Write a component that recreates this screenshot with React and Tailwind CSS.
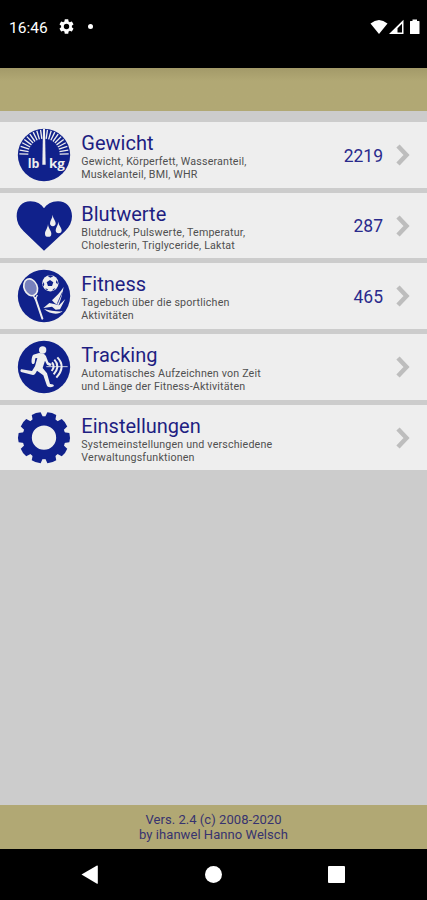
import React from "react";

const NAVY = "#10218b";
const PAPER = "#eeeeee";

// tick marks fan out over the upper half of the scale dial
const TICKS = [-89, -80, -71, -62, -53, -44, -35, -26, -17, -8, 8, 17, 26, 35, 44, 53, 62, 71, 80, 89];

function ScaleIcon() {
    return (
        <svg viewBox="22 24 162 162" className="size-[54px] shrink-0">
            <circle cx="103" cy="105" r="78.5" fill={NAVY} />
            <g stroke={PAPER} strokeWidth="4">
                {TICKS.map((a) => (
                    <line key={a} x1="103" y1="29" x2="103" y2="56" transform={`rotate(${a} 103 103)`} />
                ))}
            </g>
            <path d="M100 26h6l2 108h-10z" fill={PAPER} />
            <g fill={PAPER} fontFamily="'Open Sans', sans-serif" fontWeight="700" fontSize="37">
                <text x="54" y="143" textLength="35" lengthAdjust="spacingAndGlyphs">lb</text>
                <text x="118" y="143" textLength="48" lengthAdjust="spacingAndGlyphs">kg</text>
            </g>
        </svg>
    );
}

function HeartIcon() {
    return (
        <svg viewBox="22 26 162 162" className="size-[54px] shrink-0 overflow-visible">
            <path
                d="M103 181L42 123C28 109 21 95 21 78C21 50 38 33 62 33C82 33 96 43 103 54C111 43 125 33 145 33C169 33 187 50 187 78C187 95 180 109 166 123Z"
                fill={NAVY}
            />
            <g fill={PAPER}>
                <path d="M129 73C130 85 138 91 138 99A8.500 8.500 0 0 1 121 99C121 91 128 85 129 73Z" />
                <path d="M115 101C116 115 125 121 125 130A9.500 9.500 0 0 1 106 130C106 121 114 115 115 101Z" />
                <path d="M146 94C147 106 156 112 156 120A9 9 0 0 1 138 120C138 112 145 106 146 94Z" />
            </g>
        </svg>
    );
}

function FitnessIcon() {
    return (
        <svg viewBox="22 22 162 162" className="size-[54px] shrink-0">
            <circle cx="103" cy="103" r="78.500" fill={NAVY} />
            {/* racket */}
            <ellipse cx="63" cy="77" rx="19.500" ry="26" transform="rotate(-23 63 77)" fill="#7881bd" stroke={PAPER} strokeWidth="5" />
            <path d="M71 102L77 112L83 100" fill="none" stroke={PAPER} strokeWidth="4" />
            <path d="M77 109L98 171" stroke={PAPER} strokeWidth="6" strokeLinecap="round" />
            {/* ball */}
            <circle cx="122" cy="65" r="24.500" fill={PAPER} />
            <g fill={NAVY}>
                <path d="M121 55L131 62L127 73L115 73L111 62Z" />
                <path d="M114 43L122 41L131 44L122 48Z" />
                <path d="M100 61L104 67L102 75L99 69Z" />
                <path d="M140 55L144 61L144 68L139 63Z" />
                <path d="M131 82L137 79L133 85L127 87Z" />
                <path d="M107 80L113 82L116 86L110 84Z" />
            </g>
            {/* windsurfer */}
            <path d="M162 76C152 92 139 104 127 116C132 123 138 128 147 130C154 114 158 96 162 76Z" fill={PAPER} />
            <path d="M158 92L143 126" stroke={NAVY} strokeWidth="2.500" />
            <path d="M119 124L130 126L148 131L167 112L151 143L138 144L127 135L101 139Z" fill={PAPER} />
            <path d="M103 142C122 147 140 150 159 149C146 160 120 158 103 142Z" fill={PAPER} />
        </svg>
    );
}

function RunnerIcon() {
    return (
        <svg viewBox="22 24 162 162" className="size-[54px] shrink-0">
            <circle cx="103" cy="105" r="78.500" fill={NAVY} />
            <g fill={PAPER}>
                <circle cx="99" cy="54" r="11" />
                <path d="M88 63L71 68C67 71 65 83 66 92C67 97 73 97 75 92L77 79L83 78L76 103L67 117L36 112C31 112 31 120 37 121L70 129C75 129 79 122 82 116L101 130L111 159C113 167 124 167 132 163C135 158 126 156 121 156L112 124L99 108L106 86L112 98L121 102C127 102 127 96 122 94L116 91L109 73C106 66 98 63 88 63Z" />
            </g>
            <path d="M110 104L174 104" stroke={PAPER} strokeWidth="2.500" />
            <g fill="none" stroke={PAPER} strokeWidth="6">
                <path d="M127 91Q137 103 126 117" />
                <path d="M134 83Q153 103 132 127" />
                <path d="M143 76Q170 103 140 137" />
            </g>
        </svg>
    );
}

const TEETH = [18, 54, 90, 126, 162, 198, 234, 270, 306, 342];

function GearIcon() {
    return (
        <svg viewBox="22 26 162 162" className="size-[54px] shrink-0">
            <circle cx="103" cy="106" r="50.500" fill="none" stroke={NAVY} strokeWidth="28" />
            {TEETH.map((a) => (
                <path key={a} d="M87 46L89 30Q103 26 117 30L119 46Z" fill={NAVY} transform={`rotate(${a} 103 106)`} />
            ))}
        </svg>
    );
}

const ITEMS = [
    { title: "Gewicht", lines: ["Gewicht, Körperfett, Wasseranteil,", "Muskelanteil, BMI, WHR"], count: 2219, Icon: ScaleIcon },
    { title: "Blutwerte", lines: ["Blutdruck, Pulswerte, Temperatur,", "Cholesterin, Triglyceride, Laktat"], count: 287, Icon: HeartIcon },
    { title: "Fitness", lines: ["Tagebuch über die sportlichen", "Aktivitäten"], count: 465, Icon: FitnessIcon },
    { title: "Tracking", lines: ["Automatisches Aufzeichnen von Zeit", "und Länge der Fitness-Aktivitäten"], Icon: RunnerIcon },
    { title: "Einstellungen", lines: ["Systemeinstellungen und verschiedene", "Verwaltungsfunktionen"], Icon: GearIcon },
];

function MenuRow({ title, lines, count, Icon }) {
    return (
        <div className="flex h-[65.7px] items-center bg-[#eeeeee] pl-[17.300px] pr-[16px]">
            <Icon />
            <div className="ml-[10px] flex-1 pt-[2px]">
                <div className="text-[20px] leading-[24px] text-[#1e1e82]">{title}</div>
                {lines.map((line) => (
                    <div key={line} className="whitespace-nowrap text-[10.700px] leading-[13px] tracking-[0.17px] text-[#505050]">
                        {line}
                    </div>
                ))}
            </div>
            <div className="pt-[2px] text-[17.500px] text-[#2a2a8c]">{count}</div>
            <svg viewBox="0 0 16 24" className="ml-[12px] h-6 w-4 shrink-0">
                <path d="M3 3L11.500 12L3 21" fill="none" stroke="#bdbdbd" strokeWidth="4.500" />
            </svg>
        </div>
    );
}

function StatusBar() {
    return (
        <div className="flex h-[68px] items-start bg-black pl-[9px] pr-[7px] pt-[17px] text-white">
            <div className="w-[50px] text-[15.500px] leading-[22px]">16:46</div>
            <svg viewBox="2 2 20 20" className="mt-[2px] size-[15px]" fill="white">
                <path d="M19.140 12.940c.04-.3.060-.61.060-.94 0-.32-.020-.64-.070-.94l2.030-1.580a.49.49 0 0 0 .12-.61l-1.920-3.320a.49.49 0 0 0-.59-.22l-2.390.96c-.5-.38-1.030-.7-1.620-.94L14.400 2.810a.48.48 0 0 0-.48-.41h-3.840a.47.47 0 0 0-.47.41l-.36 2.540c-.59.24-1.130.57-1.620.94l-2.390-.96a.48.48 0 0 0-.59.22L2.740 8.870a.47.47 0 0 0 .12.61l2.030 1.580c-.05.3-.09.63-.09.94s.02.64.07.94l-2.030 1.580a.49.49 0 0 0-.12.61l1.920 3.320c.12.22.37.29.59.22l2.390-.96c.5.38 1.030.7 1.620.94l.36 2.540c.05.24.24.41.48.41h3.840c.24 0 .44-.17.47-.41l.36-2.540c.59-.24 1.130-.56 1.620-.94l2.390.96c.22.08.47 0 .59-.22l1.920-3.320a.47.47 0 0 0-.12-.61l-2.010-1.580zM12 15.600a3.600 3.600 0 1 1 0-7.200 3.600 3.600 0 0 1 0 7.200z" />
            </svg>
            <div className="ml-[14px] mt-[7px] size-[5px] rounded-full bg-white" />
            <svg viewBox="0 0 50 16" className="ml-auto mt-[2px] h-4 w-[50px]" fill="white">
                <path d="M0.500 4.500Q9 -2.500 17.500 4.500L9 15Z" />
                <path fillRule="evenodd" d="M19 15L33.500 0.800V15ZM27.500 13.600H32V4.800L27.500 9.200Z" />
                <path d="M40 2.500Q40 2 40.500 2H42.500V0.500H47V2H49Q49.500 2 49.500 2.500V14.500Q49.500 15 49 15H40.500Q40 15 40 14.500Z" />
            </svg>
        </div>
    );
}

function NavBar() {
    return (
        <div className="flex h-[51px] items-center justify-between bg-black pl-[81px] pr-[82px]">
            <svg viewBox="0 0 18 20" className="h-5 w-[18px]" fill="white">
                <path d="M0.500 9.500L16 0.500Q16.800 0.300 16.800 1V18.200Q16.800 19 16 18.700Z" />
            </svg>
            <div className="size-[17px] rounded-full bg-white" />
            <div className="size-[17px] rounded-[1px] bg-white" />
        </div>
    );
}

export default function App() {
    return (
        <div className="flex h-[900px] w-[427px] flex-col overflow-hidden bg-[#cccccc] font-[Roboto,sans-serif]">
            <StatusBar />
            <div className="h-[43px] bg-[#b1a874] bg-linear-to-b from-[#a39a69] to-[#b1a874] to-30%" />
            <div className="mt-[11px] flex flex-col gap-[5px]">
                {ITEMS.map((item) => (
                    <MenuRow key={item.title} {...item} />
                ))}
            </div>
            <div className="mt-auto flex h-[44px] flex-col justify-center bg-[#b1a874] text-center text-[13px] leading-[15.500px] tracking-[0.05px] text-[#37336f]">
                <div>Vers. 2.4 (c) 2008-2020</div>
                <div>by ihanwel Hanno Welsch</div>
            </div>
            <NavBar />
        </div>
    );
}
